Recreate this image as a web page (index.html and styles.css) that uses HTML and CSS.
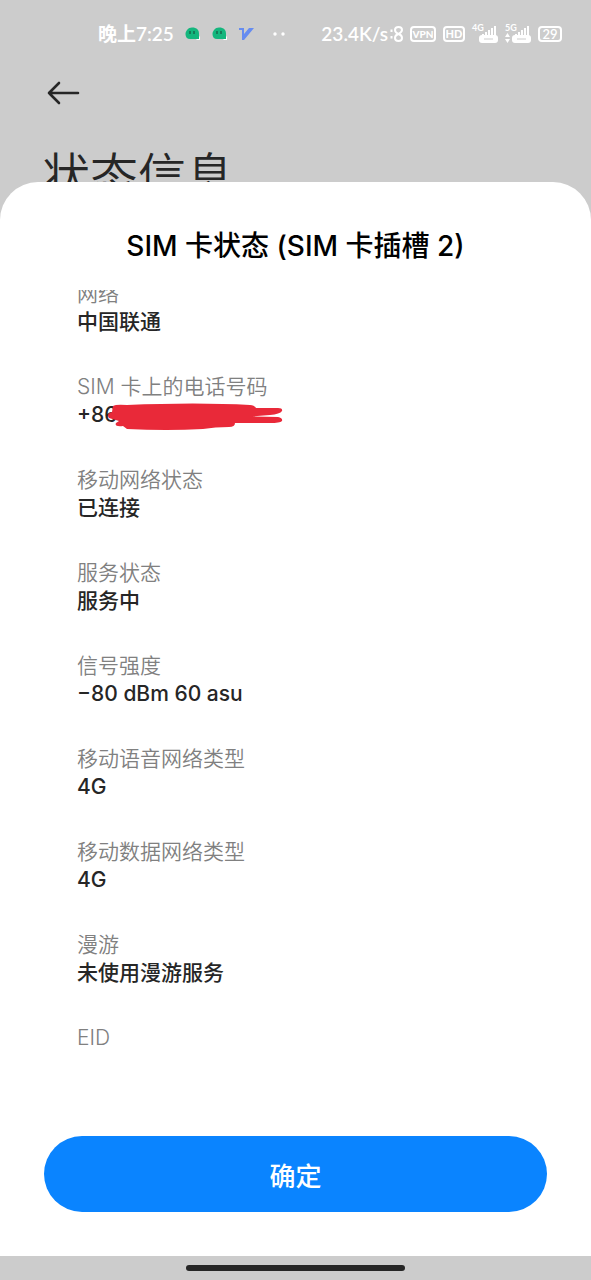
FILE: index.html
```html
<!DOCTYPE html>
<html lang="zh-CN">
<head>
<meta charset="utf-8">
<meta name="viewport" content="width=device-width, initial-scale=1">
<title>状态信息</title>
<link rel="stylesheet" href="styles.css">
</head>
<body>
<div class="status">
  <div class="status-left">
    <span class="clock">晚上7:25</span>
    <svg class="bubble" width="16" height="14" viewBox="0 0 16 14"><path d="M15 9v4h-4z" fill="#fff"/><path d="M7 .5C12 .5 14 3 14 7v5H5C2 12 .5 10 .5 7S3 .5 7 .5z" fill="#14b67d"/><path d="M5 4v3M9 4v3" stroke="#175d46" stroke-width="1.3"/></svg>
    <svg class="bubble" width="16" height="14" viewBox="0 0 16 14"><path d="M15 9v4h-4z" fill="#fff"/><path d="M7 .5C12 .5 14 3 14 7v5H5C2 12 .5 10 .5 7S3 .5 7 .5z" fill="#14b67d"/><path d="M5 4v3M9 4v3" stroke="#175d46" stroke-width="1.3"/></svg>
    <svg width="16" height="14" viewBox="0 0 16 14"><path d="M0 1h5v6l5-6h5L5 13H3V3H0z" fill="#668cf0"/></svg>
    <svg class="dots" width="14" height="6" viewBox="0 0 14 6"><circle cx="3" cy="3" r="1.7" fill="#fff"/><circle cx="11" cy="3" r="1.7" fill="#fff"/></svg>
  </div>
  <div class="status-right">
    <span class="speed">23.4K/s</span>
    <svg width="13" height="18" viewBox="0 0 13 18" fill="none" stroke="#fff" stroke-width="2"><path d="M8.500 9C6 8 5 7 5 5q0-3 3.500-3T12 5q0 2-3.500 4Q5 10 5 13q0 3 3.500 3t3.500-3q0-3-3.500-4z"/><path d="M1.500 4.500v2.500M1.500 11v2.500"/></svg>
    <span class="tag vpn">VPN</span>
    <span class="tag hd">HD</span>
    <svg class="signal" width="26" height="20" viewBox="0 0 26 20"><text x="0" y="7" class="net">4G</text><path d="M10 12v-2h2v2zM13 12V8h2v4zM16 12V6h2v6zM19 12V4h2v8zM22 12V2h2v10z" fill="#fff"/><rect x="7" y="11" width="19" height="8" rx="3" fill="#fff"/><path d="M12 15h9" stroke="#ccc"/></svg>
    <svg class="signal" width="26" height="20" viewBox="0 0 26 20"><text x="0" y="7" class="net">5G</text><path d="M10 12v-2h2v2zM13 12V8h2v4zM16 12V6h2v6zM19 12V4h2v8zM22 12V2h2v10z" fill="#fff"/><rect x="7" y="11" width="19" height="8" rx="3" fill="#fff"/><path d="M12 15h9" stroke="#ccc"/><path d="M2.500 9l2.500 4H0zM2.500 19L5 15H0z" fill="#fff"/></svg>
    <span class="tag battery">29</span>
  </div>
</div>
<header class="page-head">
  <button class="back" type="button" aria-label="返回"><svg width="34" height="24" viewBox="0 0 34 24" fill="none" stroke="#262626" stroke-width="2.6" stroke-linecap="round" stroke-linejoin="round"><path d="M32 12H3M13 2L3 12l10 10"/></svg></button>
  <h1 class="page-title">状态信息</h1>
</header>
<main class="sheet" role="dialog" aria-labelledby="sheet-title">
  <h2 class="sheet-title" id="sheet-title">SIM 卡状态 (SIM 卡插槽 2)</h2>
  <dl class="list">
    <div class="item"><dt>网络</dt><dd>中国联通</dd></div>
    <div class="item"><dt>SIM 卡上的电话号码</dt><dd class="phone">+86<svg class="scribble" width="176" height="28" viewBox="0 0 176 28"><path d="M6 3Q9 1 20 2Q90-1 143 2Q147 2 149 5H171Q176 5 175 8Q173 11 163 12L145 13.500L171 14Q176 15 175 18Q173 20 163 20H128Q128 24 122 24Q108 24 96 26Q60 28 20 26L16 23Q7 24 9 20L12 18L2 15Q-1 11 5 9z" fill="#e92939"/></svg></dd></div>
    <div class="item"><dt>移动网络状态</dt><dd>已连接</dd></div>
    <div class="item"><dt>服务状态</dt><dd>服务中</dd></div>
    <div class="item"><dt>信号强度</dt><dd>−80 dBm 60 asu</dd></div>
    <div class="item"><dt>移动语音网络类型</dt><dd>4G</dd></div>
    <div class="item"><dt>移动数据网络类型</dt><dd>4G</dd></div>
    <div class="item"><dt>漫游</dt><dd>未使用漫游服务</dd></div>
    <div class="item"><dt>EID</dt></div>
  </dl>
  <button class="ok" type="button">确定</button>
</main>
<footer class="nav"><span class="handle"></span></footer>
</body>
</html>
```
FILE: styles.css
```css
* { box-sizing: border-box; }
body {
  margin: 0;
  min-height: 100vh;
  display: flex;
  flex-direction: column;
  background: #ccc;
  font-family: Inter, "Noto Sans CJK SC", sans-serif;
  color: #262626;
}
button { border: 0; padding: 0; font: inherit; cursor: pointer; }
svg { display: block; flex: none; }

.status {
  display: flex;
  justify-content: space-between;
  align-items: center;
  padding: 20px 29px 0 98px;
  color: #fff;
  font-family: Lato, "Noto Sans CJK SC", sans-serif;
  font-size: 19px;
  font-weight: 600;
  line-height: 28px;
}
.status-left, .status-right { display: flex; align-items: center; white-space: nowrap; }
.status-left { gap: 11px; }
.dots { margin-left: 6px; }
.status-right { gap: 7px; }
.speed { margin-right: -5px; }
.tag {
  display: flex;
  align-items: center;
  justify-content: center;
  height: 16px;
  border: 2px solid #fff;
  border-radius: 4px;
  font-size: 10px;
  line-height: 12px;
  font-weight: 900;
}
.vpn { width: 26px; }
.hd { width: 22px; font-size: 11px; }
.battery { width: 24px; font-size: 13px; font-weight: 600; }
.signal { overflow: visible; }
.net { font-size: 9px; font-weight: 700; fill: #fff; }

.page-head { padding: 33px 42px 0; }
.back { display: block; margin-left: 4px; background: none; }
.page-title {
  margin: 33px 0 0;
  font-size: 48px;
  line-height: 68px;
  font-weight: 350;
  font-family: "Noto Sans CJK SC", sans-serif;
}

.sheet {
  position: relative;
  flex: 1;
  display: flex;
  flex-direction: column;
  margin-top: -24px;
  padding: 44px 44px;
  background: #fff;
  border-radius: 38px 38px 0 0;
}
.sheet-title {
  margin: 0 0 24px;
  text-align: center;
  color: #000;
  font-size: 28px;
  line-height: 40px;
  font-weight: 500;
}
.list {
  flex: 1;
  margin: 0;
  padding: 0 33px;
  overflow: hidden;
  font-size: 21px;
  line-height: 28px;
}
.item { margin-bottom: 37px; }
.item:first-child { margin-top: -10px; }
dt { color: #808080; font-weight: 350; }
dd { margin: 0; font-weight: 500; }
.phone { position: relative; }
.scribble { position: absolute; left: 30px; top: 2px; }

.ok {
  height: 76px;
  border-radius: 38px;
  background: #0a84ff;
  color: #fff;
  font-size: 26px;
  font-weight: 500;
}
.nav {
  display: flex;
  justify-content: center;
  align-items: center;
  height: 24px;
}
.handle { width: 37%; height: 6px; border-radius: 3px; background: #262626; }
```
